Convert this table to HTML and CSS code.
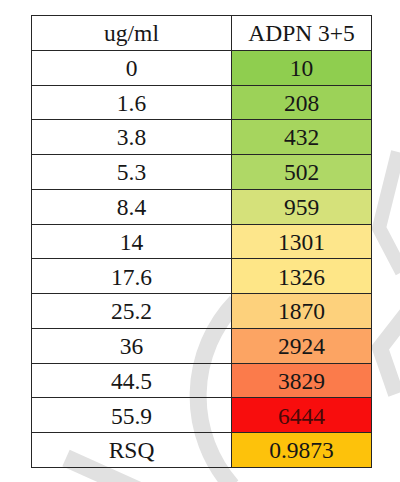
FILE: index.html
```html
<!DOCTYPE html>
<html>
<head>
<meta charset="utf-8">
<link rel="stylesheet" href="styles.css">
</head>
<body>
<svg class="watermark" width="400" height="482" viewBox="0 0 400 482" aria-hidden="true">
  <g fill="none" stroke="#e1e1e1" stroke-linecap="butt" stroke-linejoin="miter">
    <path d="M 236 302 A 136 136 0 0 0 232 486" stroke-width="17"/>
    <polyline points="398,152 379,228 402,272" stroke-width="14"/>
    <polyline points="408,312 380,348 396,394" stroke-width="16"/>
    <line x1="66" y1="458" x2="146" y2="494" stroke-width="18"/>
  </g>
</svg>
<div class="sheet">
  <div class="cell">ug/ml</div><div class="cell head">ADPN 3+5</div>
  <div class="cell">0</div><div class="cell v1">10</div>
  <div class="cell">1.6</div><div class="cell v2">208</div>
  <div class="cell">3.8</div><div class="cell v3">432</div>
  <div class="cell">5.3</div><div class="cell v4">502</div>
  <div class="cell">8.4</div><div class="cell v5">959</div>
  <div class="cell">14</div><div class="cell v6">1301</div>
  <div class="cell">17.6</div><div class="cell v7">1326</div>
  <div class="cell">25.2</div><div class="cell v8">1870</div>
  <div class="cell">36</div><div class="cell v9">2924</div>
  <div class="cell">44.5</div><div class="cell v10">3829</div>
  <div class="cell">55.9</div><div class="cell v11">6444</div>
  <div class="cell">RSQ</div><div class="cell v12">0.9873</div>
</div>
</body>
</html>
```

FILE: styles.css
```css
html, body {
  margin: 0;
  padding: 0;
  background: #ffffff;
}

body {
  position: relative;
  width: 400px;
  height: 482px;
  overflow: hidden;
  padding-top: 15px;
  padding-left: 31px;
  box-sizing: border-box;
  font-family: "Liberation Serif", "Times New Roman", serif;
}

.watermark {
  position: absolute;
  left: 0;
  top: 0;
  z-index: 0;
}

.sheet {
  position: relative;
  z-index: 1;
  display: grid;
  grid-template-columns: 200px 140px;
  grid-template-rows: repeat(13, 1fr);
  height: 453px;
  width: 341px;
  box-sizing: border-box;
  border-top: 1px solid #262626;
  border-left: 1px solid #262626;
}

.cell {
  display: flex;
  align-items: center;
  justify-content: center;
  border-right: 1px solid #262626;
  border-bottom: 1px solid #262626;
  font-size: 23.5px;
  color: #161616;
  padding-top: 2px;
  box-sizing: border-box;
  line-height: 1;
}

.head { background: #ffffff; }
.v1 { background: #8fce4f; }
.v2 { background: #9cd258; }
.v3 { background: #a6d55e; }
.v4 { background: #afd866; }
.v5 { background: #d5e17a; }
.v6 { background: #fde68b; }
.v7 { background: #fee687; }
.v8 { background: #fdd17c; }
.v9 { background: #fca463; }
.v10 { background: #fb7b4b; }
.v11 { background: #f80d0d; color: #4a0808; }
.v12 { background: #fdc20b; }
```
